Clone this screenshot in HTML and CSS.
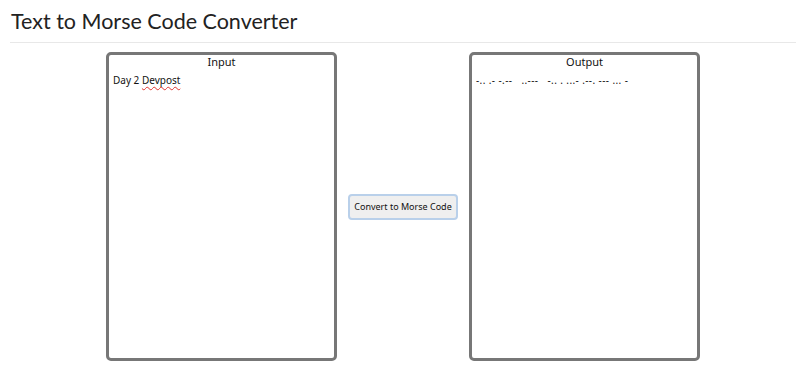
FILE: index.html
```html
<!DOCTYPE html>
<html lang="en">
<head>
    <meta charset="UTF-8">
    <meta name="viewport" content="width=device-width, initial-scale=1.0">
    <title>Text to Morse Code Converter</title>
    <link rel="stylesheet" href="styles.css">
</head>
<body>
    <h1 class="page-title">Text to Morse Code Converter</h1>

    <div class="converter">
        <div class="panel">
            <div class="panel-label">Input</div>
            <div class="text-box" id="input-text">Day 2 <span class="typo">Devpost</span></div>
        </div>

        <button id="convert-btn" class="convert-btn">Convert to Morse Code</button>

        <div class="panel">
            <div class="panel-label">Output</div>
            <div class="text-box morse" id="output-text">-.. .- -.--   ..---   -.. . ...- .--. --- ... -</div>
        </div>
    </div>
</body>
</html>
```

FILE: styles.css
```css
* {
    box-sizing: border-box;
}

body {
    margin: 0;
    padding: 0 10px;
    background-color: #fff;
    font-family: 'Noto Sans', sans-serif;
    color: #222;
}

.page-title {
    margin: 0;
    padding: 7px 1px 6px;
    font-family: 'Lato', sans-serif;
    font-size: 21.5px;
    font-weight: 400;
    line-height: 29px;
    color: #222;
    border-bottom: 1px solid #e8e8e8;
}

.converter {
    display: flex;
    justify-content: center;
    align-items: center;
    gap: 11px;
    margin-top: 9px;
}

.panel {
    display: flex;
    flex-direction: column;
    width: 231px;
    height: 309px;
    border: 3px solid #777;
    border-radius: 5px;
    padding: 0 4px;
}

.panel-label {
    text-align: center;
    font-size: 11px;
    line-height: 14px;
    color: #111;
}

.text-box {
    flex: 1;
    padding: 2px 0;
    margin-top: 2px;
    font-size: 10px;
    line-height: 14px;
    color: #111;
    white-space: pre;
}

.morse {
    letter-spacing: 0.4px;
}

.typo {
    text-decoration: underline wavy #e0342f;
    text-decoration-thickness: 1px;
    text-underline-offset: 2px;
}

.convert-btn {
    width: 110px;
    height: 26px;
    padding: 0;
    background-color: #efefef;
    border: 2px solid #b9d0ea;
    border-radius: 4px;
    font-family: 'Noto Sans', sans-serif;
    font-size: 9px;
    color: #111;
}
```
